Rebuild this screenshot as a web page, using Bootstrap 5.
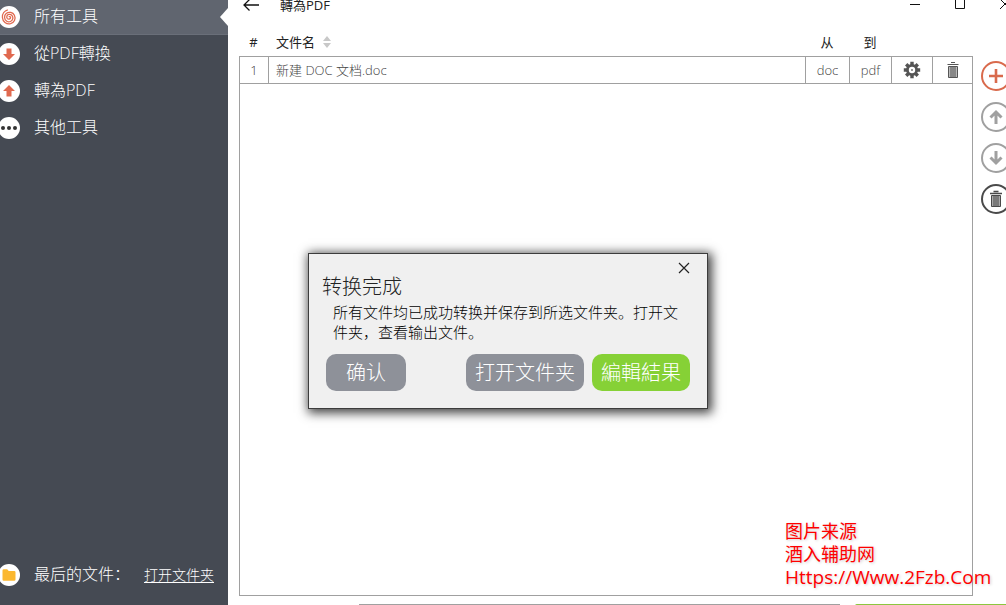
<!DOCTYPE html>
<html lang="zh">
<head>
<meta charset="utf-8">
<meta name="viewport" content="width=device-width, initial-scale=1">
<title>轉為PDF</title>
<link href="https://cdn.jsdelivr.net/npm/bootstrap@5.3.0/dist/css/bootstrap.min.css" rel="stylesheet">
<style>
  body { font-family: "Open Sans", "Noto Sans CJK SC", sans-serif; font-size: 13px; color: #222; background: #fff; }
  svg { display: block; flex-shrink: 0; }

  /* sidebar */
  .sidebar { width: 228px; background: #454a53; }
  .tool { height: 37px; gap: 14px; color: #fff; font-size: 16px; font-weight: 300; line-height: 24px; text-decoration: none; }
  .tool span { padding-bottom: 2px; }
  .tool.active { height: 35px; background: #60656f; border-bottom: 1px solid #6a6f79; }
  .tool.active::after { content: ""; margin-left: auto; border: 9px solid transparent; border-left: 0; border-right: 8px solid #fff; }
  .tool.recent { height: 60px; }
  .recent a { color: #fff; font-size: 14px; font-weight: 300; text-underline-offset: 2px; }

  /* window header */
  .titlebar { height: 10px; gap: 21px; padding-left: 15px; font-size: 13px; line-height: 20px; }
  .plain { border: 0; padding: 0; background: none; }

  /* file table */
  .files { padding: 18px 0 0 11px; }
  .file-table { table-layout: fixed; border-collapse: separate; border-spacing: 0; line-height: 18px; }
  .file-table th, .file-table td { height: 28px; padding: 0; text-align: center; vertical-align: middle; }
  .file-table th { font-weight: 400; color: #222; }
  .file-table td { color: #444; font-weight: 300; border: 1px solid #a0a0a0; border-right-width: 0; }
  .file-table td:last-child { border-right-width: 1px; }
  .file-table .name { text-align: left; padding-left: 7px; }
  .file-table th.name { padding-left: 8px; }
  .c-num { width: 29px; } .c-from { width: 44px; } .c-to { width: 42px; } .c-act { width: 41px; }
  .drop-area { border: 1px solid #a0a0a0; border-top: 0; }
  .rail { width: 33px; padding: 51px 0 0 8px; gap: 11px; }

  /* bottom bar */
  .bottombar { height: 9px; padding: 8px 0 0 131px; gap: 15px; }
  .bottombar input { width: 481px; height: 34px; border: 1px solid #a0a0a0; }
  .bottombar button { height: 34px; background: #8cc63e; border-radius: 2px 0 0 2px; }

  /* message box */
  .msgbox { left: 80px; top: 253px; width: 400px; padding: 8px 17px 17px 13px; background: #f0f0f0; border: 1px solid #3c3c3c; box-shadow: 2px 2px 10px 2px rgba(0,0,0,.75); font-weight: 300; }
  .msgbox h2 { font-size: 20px; line-height: 26px; font-weight: 300; margin: 0 0 2px; color: #222; }
  .msgbox p { font-size: 15px; line-height: 20px; margin: 0 0 12px 11px; width: 345px; color: #000; }
  .msgbtn { height: 37px; padding: 0; border: 0; border-radius: 10px; font-size: 20px; line-height: 37px; font-weight: 300; color: #fff; background: #8e9199; }
  .msgbtn.ok { width: 80px; } .msgbtn.open { width: 118px; } .msgbtn.edit { width: 98px; background: #86d136; }

  .source-note { right: 18px; bottom: 16px; width: 203px; color: #f00; font-size: 18px; line-height: 23px; text-shadow: 1px 1px 3px rgba(0,0,0,.2); white-space: nowrap; }
  .source-note .site { font-size: 19px; }
</style>
</head>
<body>
<div class="d-flex vh-100 overflow-hidden">

  <nav class="sidebar d-flex flex-column flex-shrink-0">
    <a href="#" class="tool active d-flex align-items-center">
      <svg width="20" height="22" viewBox="2 0 20 22"><circle cx="11" cy="11" r="11" fill="#fff"/><path d="M11 11c.3-.9 1.700-.4 1.600.7-.2 1.500-2.200 1.900-3.200.9-1.400-1.500-.4-4 1.700-4.200 2.500-.2 4.200 2 3.700 4.300-.6 2.700-3.700 3.900-6 2.500C6 13.500 5.800 9.500 8.200 7.500c2.700-2.200 6.700-1.200 8.200 1.800 1.700 3.500-.2 7.500-3.900 8.400-4.200.9-7.800-2.200-8.100-6.200-.3-3.500 2-6.700 5.400-7.700" fill="none" stroke="#e0694f" stroke-width="1.300"/></svg>
      <span>所有工具</span>
    </a>
    <a href="#" class="tool d-flex align-items-center">
      <svg width="20" height="22" viewBox="2 0 20 22"><circle cx="11" cy="11" r="11" fill="#fff"/><path d="M8.500 5.500h5V11H17l-6 6-6-6h3.500z" fill="#e0694f"/></svg>
      <span>從PDF轉換</span>
    </a>
    <a href="#" class="tool d-flex align-items-center">
      <svg width="20" height="22" viewBox="2 0 20 22"><circle cx="11" cy="11" r="11" fill="#fff"/><path d="M8.500 16.500h5V11H17l-6-6-6 6h3.500z" fill="#e0694f"/></svg>
      <span>轉為PDF</span>
    </a>
    <a href="#" class="tool d-flex align-items-center">
      <svg width="20" height="22" viewBox="2 0 20 22"><circle cx="11" cy="11" r="11" fill="#fff"/><g fill="#333"><circle cx="5" cy="11" r="2"/><circle cx="11" cy="11" r="2"/><circle cx="17" cy="11" r="2"/></g></svg>
      <span>其他工具</span>
    </a>
    <div class="tool recent d-flex align-items-center mt-auto">
      <svg width="20" height="22" viewBox="2 0 20 22"><circle cx="11" cy="11" r="11" fill="#fff"/><path d="M4.500 6.500q0-1.200 1.200-1.200h3.500l1.500 1.700h5.600q1.200 0 1.200 1.200v7.300q0 1.200-1.200 1.200H5.700q-1.200 0-1.200-1.200z" fill="#fbb830"/></svg>
      <span>最后的文件：</span>
      <a href="#">打开文件夹</a>
    </div>
  </nav>

  <main class="d-flex flex-column flex-grow-1 position-relative overflow-hidden">
    <header class="titlebar d-flex align-items-center">
      <button class="plain" aria-label="返回"><svg width="16" height="12" viewBox="0 0 16 12" fill="none" stroke="#111" stroke-width="1.300"><path d="M16 6H1M6.500.5L1 6l5.500 5.500"/></svg></button>
      <span>轉為PDF</span>
      <div class="d-flex align-items-center ms-auto">
        <button class="plain" aria-label="最小化"><svg width="45" height="12" viewBox="0 0 45 12"><path d="M0 5.500h10" stroke="#111"/></svg></button>
        <button class="plain" aria-label="最大化"><svg width="45" height="12" viewBox="0 0 45 12"><path d="M.5.500h9v9h-9z" fill="none" stroke="#111"/></svg></button>
        <button class="plain" aria-label="关闭"><svg width="6" height="12" viewBox="0 0 6 12"><path d="M0 0l10 10M0 10L10 0" stroke="#111"/></svg></button>
      </div>
    </header>

    <div class="d-flex flex-grow-1">
      <section class="files d-flex flex-column flex-grow-1">
        <table class="file-table w-100">
          <colgroup><col class="c-num"><col><col class="c-from"><col class="c-to"><col class="c-act"><col class="c-act"></colgroup>
          <thead>
            <tr>
              <th>#</th>
              <th class="name"><div class="d-flex align-items-center gap-2">文件名 <svg width="8" height="12" viewBox="0 0 8 12" fill="#c8c8c8"><path d="M4 0l4 5H0zM4 12L0 7h8z"/></svg></div></th>
              <th>从</th><th>到</th><th></th><th></th>
            </tr>
          </thead>
          <tbody>
            <tr>
              <td>1</td><td class="name">新建 DOC 文档.doc</td><td>doc</td><td>pdf</td>
              <td><button class="plain d-block mx-auto" aria-label="设置"><svg width="18" height="18" viewBox="0 0 18 18"><g stroke="#555" stroke-width="3.400"><path d="M9 .8v16.400M.8 9h16.400M3.200 3.200l11.600 11.600M3.200 14.800L14.800 3.200"/></g><circle cx="9" cy="9" r="6" fill="#555"/><circle cx="9" cy="9" r="3.200" fill="#fff"/><circle cx="9" cy="9" r="1" fill="#777"/></svg></button></td>
              <td><button class="plain d-block mx-auto" aria-label="删除"><svg width="12" height="16" viewBox="0 0 12 16"><path d="M4 .5h4M.5 2.500h11" stroke="#555" stroke-width="1.200"/><path d="M1.500 4.500h9v11h-9z" fill="#bbb" stroke="#555"/><path d="M4 5v10M6 5v10M8 5v10" stroke="#555"/></svg></button></td>
            </tr>
          </tbody>
        </table>
        <div class="drop-area flex-grow-1"></div>
      </section>

      <aside class="rail d-flex flex-column">
        <button class="plain" aria-label="添加"><svg width="30" height="30" viewBox="0 0 30 30" fill="none" stroke="#d96a4c"><circle cx="15" cy="15" r="14" stroke-width="2"/><path d="M15 8v14M8 15h14" stroke-width="2.600"/></svg></button>
        <button class="plain" aria-label="上移"><svg width="30" height="30" viewBox="0 0 30 30" fill="none" stroke="#a0a0a0"><circle cx="15" cy="15" r="14" stroke-width="2"/><path d="M15 22V10M9.500 15.500L15 10l5.500 5.500" stroke-width="3"/></svg></button>
        <button class="plain" aria-label="下移"><svg width="30" height="30" viewBox="0 0 30 30" fill="none" stroke="#a0a0a0"><circle cx="15" cy="15" r="14" stroke-width="2"/><path d="M15 8v12M9.500 14.500L15 20l5.500-5.500" stroke-width="3"/></svg></button>
        <button class="plain" aria-label="全部删除"><svg width="30" height="30" viewBox="0 0 30 30" fill="none" stroke="#4a4a4a"><circle cx="15" cy="15" r="14" stroke-width="2"/><path d="M12.500 7.500h5M9 9.500h12" stroke-width="1.500"/><path d="M10.500 11.500h9v11h-9z" fill="#aaa"/><path d="M13 12v10M15 12v10M17 12v10"/></svg></button>
      </aside>
    </div>

    <footer class="bottombar d-flex overflow-hidden">
      <input type="text" aria-label="输出文件夹">
      <button class="plain flex-grow-1" aria-label="转换"></button>
    </footer>

    <div class="msgbox position-absolute" role="dialog" aria-labelledby="msg-title">
      <div class="d-flex justify-content-end"><button class="plain" aria-label="关闭"><svg width="12" height="12" viewBox="0 0 12 12"><path d="M1 1l10 10M1 11L11 1" stroke="#222" stroke-width="1.200"/></svg></button></div>
      <h2 id="msg-title">转换完成</h2>
      <p>所有文件均已成功转换并保存到所选文件夹。打开文件夹，查看输出文件。</p>
      <div class="d-flex gap-2 ps-1">
        <button class="msgbtn ok me-auto">确认</button>
        <button class="msgbtn open">打开文件夹</button>
        <button class="msgbtn edit">編輯結果</button>
      </div>
    </div>

    <div class="source-note position-absolute">图片来源<br>酒入辅助网<br><span class="site">Https://Www.2Fzb.Com</span></div>
  </main>
</div>
<script src="https://cdn.jsdelivr.net/npm/bootstrap@5.3.0/dist/js/bootstrap.bundle.min.js"></script>
</body>
</html>
